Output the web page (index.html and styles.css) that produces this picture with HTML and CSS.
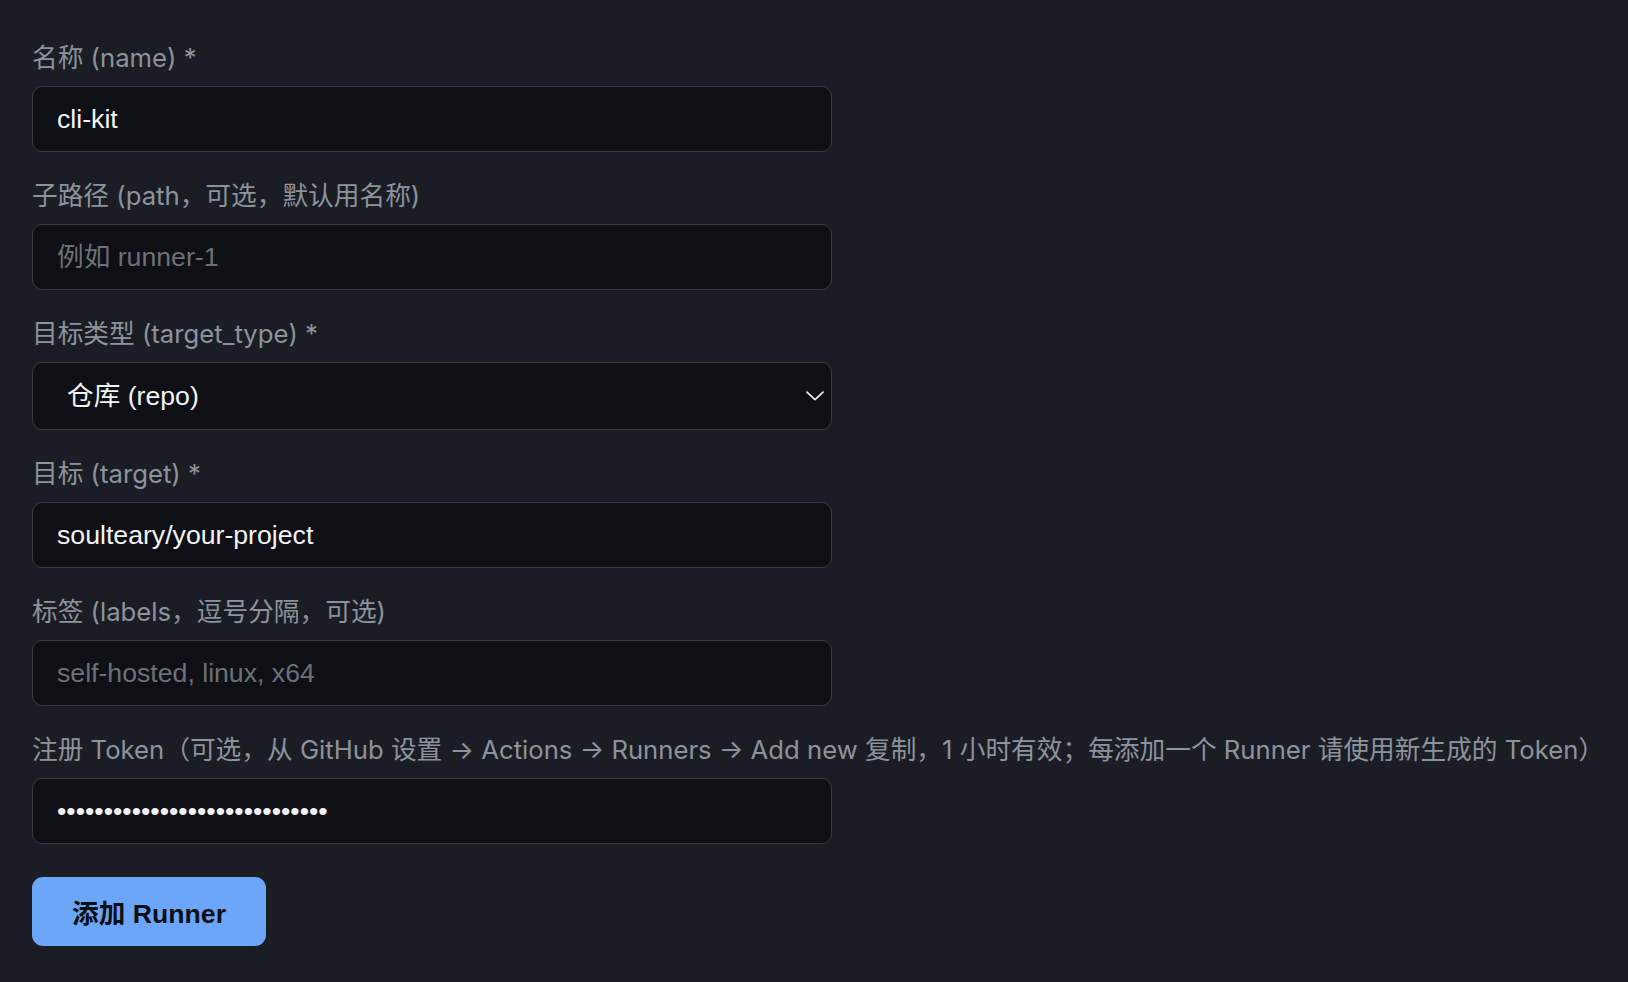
FILE: index.html
```html
<!DOCTYPE html>
<html lang="zh-CN">
<head>
<meta charset="utf-8">
<title>添加 Runner</title>
<link rel="stylesheet" href="styles.css">
</head>
<body>
<form class="runner-form">
  <div class="field">
    <label class="field-label" for="name">名称 (name) *</label>
    <input class="field-input" id="name" type="text" value="cli-kit">
  </div>
  <div class="field">
    <label class="field-label" for="path">子路径 (path，可选，默认用名称)</label>
    <input class="field-input" id="path" type="text" placeholder="例如 runner-1">
  </div>
  <div class="field">
    <label class="field-label" for="ttype">目标类型 (target_type) *</label>
    <div class="select-wrap">
      <select class="field-select" id="ttype">
        <option>仓库 (repo)</option>
        <option>组织 (org)</option>
      </select>
      <svg class="select-chevron" viewBox="0 0 18 10" width="18" height="10" aria-hidden="true">
        <path d="M1 1.2 L9 8.6 L17 1.2" fill="none" stroke="#e6e8eb" stroke-width="1.8" stroke-linecap="round" stroke-linejoin="round"/>
      </svg>
    </div>
  </div>
  <div class="field">
    <label class="field-label" for="target">目标 (target) *</label>
    <input class="field-input" id="target" type="text" value="soulteary/your-project">
  </div>
  <div class="field">
    <label class="field-label" for="labels">标签 (labels，逗号分隔，可选)</label>
    <input class="field-input" id="labels" type="text" placeholder="self-hosted, linux, x64">
  </div>
  <div class="field">
    <label class="field-label" for="token">注册 Token（可选，从 GitHub 设置 → Actions → Runners → Add new 复制，1 小时有效；每添加一个 Runner 请使用新生成的 Token）</label>
    <input class="field-input" id="token" type="password" value="AABBCCDDEEFFGGHHIIJJKKLLMMNOP">
  </div>
  <button class="submit-btn" type="button">添加 Runner</button>
</form>
</body>
</html>
```

FILE: styles.css
```css
html, body {
  margin: 0;
  padding: 0;
  background: #1b1d24;
}

body {
  font-family: "Liberation Sans", "Noto Sans CJK SC", sans-serif;
  color: #e6e8eb;
}

.runner-form {
  display: flex;
  flex-direction: column;
  align-items: flex-start;
  padding: 43px 32px 0 32px;
}

.field {
  display: flex;
  flex-direction: column;
  gap: 13px;
  margin-bottom: 29px;
}

.field-label {
  font-family: "Inter", "Noto Sans CJK SC", sans-serif;
  font-size: 25.7px;
  line-height: 30px;
  color: #8d939d;
  white-space: nowrap;
}

.field-input,
.field-select {
  box-sizing: border-box;
  width: 800px;
  height: 66px;
  margin: 0;
  padding: 0 24px;
  background: #0e1015;
  border: 1px solid #383b42;
  border-radius: 10px;
  color: #f2f3f5;
  font-family: "Liberation Sans", "Noto Sans CJK SC", sans-serif;
  font-size: 26.67px;
  outline: none;
}

.field-input::placeholder {
  color: #6c7078;
  opacity: 1;
}

.select-wrap {
  position: relative;
  width: 800px;
}

.field-select {
  height: 68px;
  padding: 0 34px;
  appearance: none;
  -webkit-appearance: none;
}

.select-chevron {
  position: absolute;
  right: 8px;
  top: 29px;
  pointer-events: none;
}

.submit-btn {
  box-sizing: border-box;
  width: 234px;
  height: 69px;
  margin-top: 4px;
  padding: 0;
  border: none;
  border-radius: 11px;
  background: #6ba6f9;
  color: #0c0f14;
  font-family: "Liberation Sans", "Noto Sans CJK SC", sans-serif;
  font-size: 26.67px;
  font-weight: 700;
  cursor: pointer;
}
```
